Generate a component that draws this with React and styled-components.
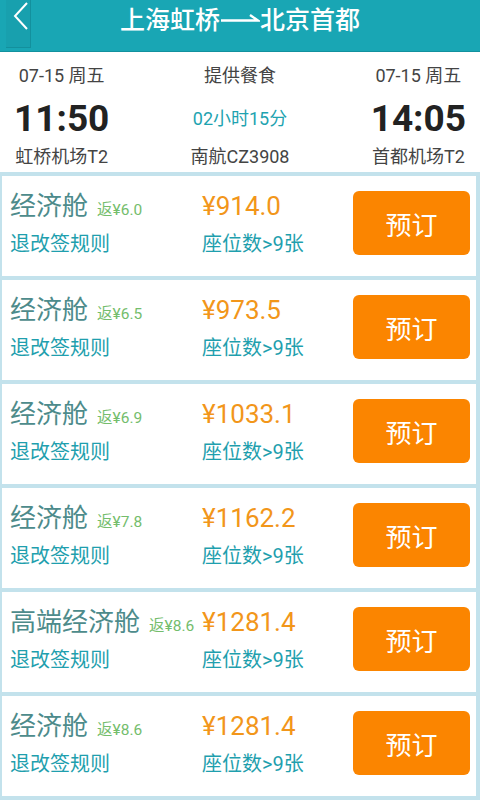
import React from "react";
import styled, { createGlobalStyle } from "styled-components";

const GlobalStyle = createGlobalStyle`
  body {
    margin: 0;
    background: #ffffff;
    font-family: Roboto, "Noto Sans CJK SC", sans-serif;
  }
`;

const fares = [
  { cabin: "经济舱", back: "6.0", price: "914.0" },
  { cabin: "经济舱", back: "6.5", price: "973.5" },
  { cabin: "经济舱", back: "6.9", price: "1033.1" },
  { cabin: "经济舱", back: "7.8", price: "1162.2" },
  { cabin: "高端经济舱", back: "8.6", price: "1281.4" },
  { cabin: "经济舱", back: "8.6", price: "1281.4" },
];

const Page = styled.div`
  width: 480px;
  height: 800px;
  overflow: hidden;
  display: flex;
  flex-direction: column;
`;

const Header = styled.header`
  position: relative;
  height: 51px;
  background: #19a6b4;
  border-bottom: 1px solid #12919e;
  display: flex;
  justify-content: center;
`;

const BackButton = styled.div`
  position: absolute;
  left: 6px;
  top: 0;
  width: 24px;
  height: 47px;
  background: #18a0ae;
  border-right: 1px solid #13909d;
  border-bottom: 1px solid #13909d;
  display: flex;
  justify-content: flex-end;
`;

const Title = styled.h1`
  margin: 3px 0 0;
  display: flex;
  align-items: flex-start;
  height: 30px;
  font-size: 25px;
  line-height: 30px;
  font-weight: 500;
  color: #ffffff;
  font-family: "Noto Sans CJK SC", sans-serif;
`;

const Info = styled.section`
  height: 120px;
  display: flex;
  justify-content: space-between;
  padding: 0 14px;
  background: #ffffff;
`;

const InfoCol = styled.div`
  display: flex;
  flex-direction: column;
  align-items: center;
  padding-top: 11px;
`;

const SmallText = styled.div`
  height: 26px;
  font-size: 18px;
  line-height: 26px;
  color: ${(p) => (p.$accent ? "#1ea3b0" : "#444444")};
`;

const Time = styled.div`
  height: 50px;
  margin: 5px 0 0;
  font-size: 37px;
  line-height: 50px;
  font-weight: 700;
  color: #222222;
`;

const MidLine = styled.div`
  height: 50px;
  margin-top: 5px;
  display: flex;
  align-items: center;
`;

const List = styled.div`
  flex: 1;
  background: #c3e2ec;
  padding: 4px 4px 0 2px;
  display: flex;
  flex-direction: column;
  gap: 4px;
`;

const Card = styled.div`
  height: 100px;
  flex-shrink: 0;
  background: #ffffff;
  display: flex;
  padding-left: 8px;
`;

const Column = styled.div`
  width: ${(p) => p.$width}px;
  display: flex;
  flex-direction: column;
`;

const LineTop = styled.div`
  height: 36px;
  margin-top: 12px;
  display: flex;
  align-items: baseline;
  white-space: nowrap;
`;

const LineBottom = styled.div`
  height: 28px;
  margin-top: 6px;
  line-height: 28px;
  font-size: 20px;
  color: #1f9fae;
  white-space: nowrap;
`;

const Cabin = styled.span`
  font-size: 26px;
  line-height: 36px;
  color: #4d8b8b;
`;

const Rebate = styled.span`
  margin-left: 9px;
  font-size: 15.5px;
  color: #74bd6c;
`;

const Price = styled.span`
  font-size: 26px;
  line-height: 36px;
  color: #f2961a;
`;

const BookButton = styled.button`
  margin: 15px 6px 0 auto;
  width: 117px;
  height: 64px;
  border: none;
  border-radius: 6px;
  background: #fb8500;
  color: #ffffff;
  font-size: 26px;
  font-family: "Noto Sans CJK SC", sans-serif;
  padding: 0;
`;

const Arrow = () => (
  <svg width="40" height="30" viewBox="0 0 40 30">
    <path d="M1 17.5 H38 L30 12" stroke="#ffffff" strokeWidth="2.4" fill="none" />
  </svg>
);

const Chevron = () => (
  <svg width="18" height="32" viewBox="0 0 18 32">
    <path d="M15 3 L3 16 L15 29" stroke="#ffffff" strokeWidth="2" fill="none" />
  </svg>
);

export default function App() {
  return (
    <Page>
      <GlobalStyle />
      <Header>
        <BackButton>
          <Chevron />
        </BackButton>
        <Title>
          上海虹桥
          <Arrow />
          北京首都
        </Title>
      </Header>
      <Info>
        <InfoCol>
          <SmallText>07-15 周五</SmallText>
          <Time>11:50</Time>
          <SmallText>虹桥机场T2</SmallText>
        </InfoCol>
        <InfoCol>
          <SmallText>提供餐食</SmallText>
          <MidLine>
            <SmallText $accent>02小时15分</SmallText>
          </MidLine>
          <SmallText>南航CZ3908</SmallText>
        </InfoCol>
        <InfoCol>
          <SmallText>07-15 周五</SmallText>
          <Time>14:05</Time>
          <SmallText>首都机场T2</SmallText>
        </InfoCol>
      </Info>
      <List>
        {fares.map((f, i) => (
          <Card key={i}>
            <Column $width={192}>
              <LineTop>
                <Cabin>{f.cabin}</Cabin>
                <Rebate>返¥{f.back}</Rebate>
              </LineTop>
              <LineBottom>退改签规则</LineBottom>
            </Column>
            <Column $width={140}>
              <LineTop>
                <Price>¥{f.price}</Price>
              </LineTop>
              <LineBottom>座位数&gt;9张</LineBottom>
            </Column>
            <BookButton>预订</BookButton>
          </Card>
        ))}
      </List>
    </Page>
  );
}
